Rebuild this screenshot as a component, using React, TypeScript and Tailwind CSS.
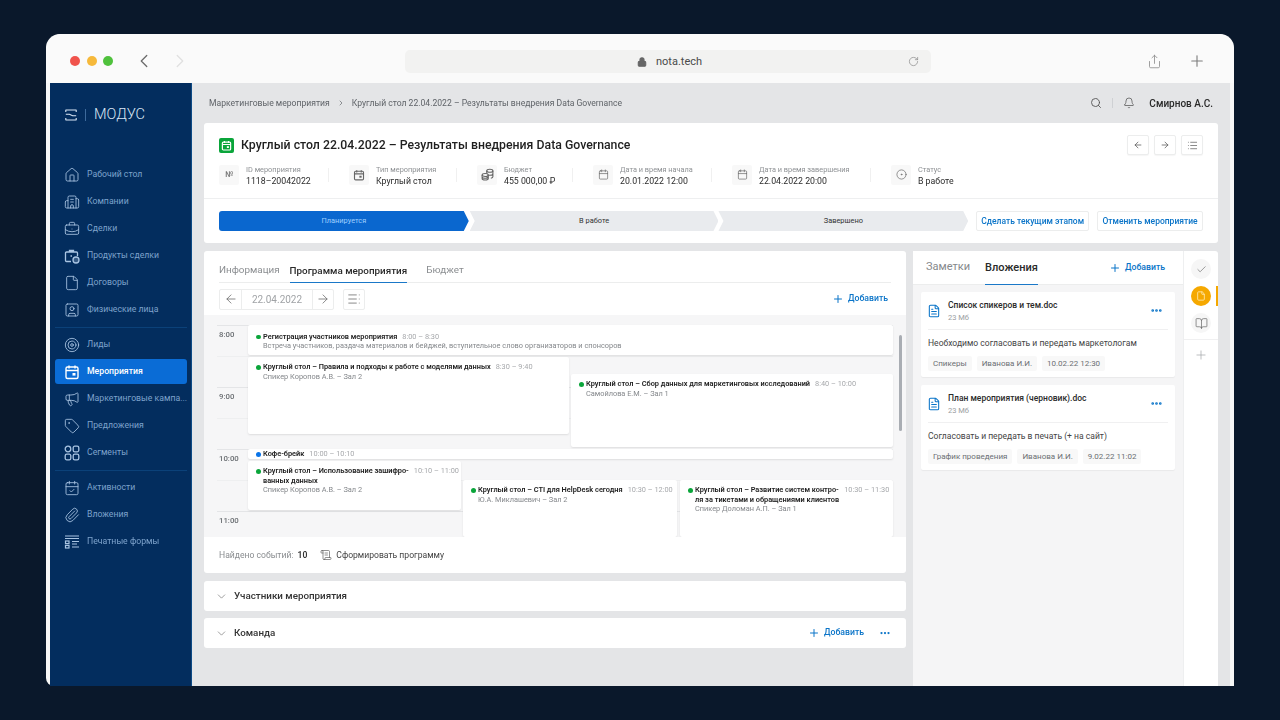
import React from "react";
import {
  House, Building2, BriefcaseBusiness, File, SquareUser, Target, Megaphone, Tag,
  CalendarCheck, Paperclip, ChevronLeft, ChevronRight, ChevronDown, Lock, RotateCw, Share, Plus, Search, Bell,
  ArrowLeft, ArrowRight, List, Calendar, CircleDot, FileText, Check, BookOpen, Ellipsis, ScrollText,
} from "lucide-react";

function EventIcon({ size = 16, sw = 1.4 }: { size?: number; sw?: number }) {
  return (
    <svg width={size} height={size} viewBox="0 0 16 16" fill="none" stroke="currentColor" strokeWidth={sw} className="shrink-0">
      <rect x="2" y="3" width="12" height="11.5" rx="1.5" />
      <path d="M2 6.5h12M5 1.5v3M11 1.5v3" />
      <rect x="8.5" y="9" width="3" height="2.6" fill="currentColor" stroke="none" />
    </svg>
  );
}
function CoinStack() {
  return (
    <svg width="13" height="13" viewBox="0 0 14 14" fill="none" stroke="currentColor" strokeWidth="1.2" className="shrink-0">
      <ellipse cx="9.5" cy="3" rx="3.3" ry="1.6" />
      <path d="M6.2 3v6.5c0 .5.8 1 1.8 1.3M12.8 3v6.5c0 .8-1 1.3-2.2 1.5M6.2 6.2c0 .9 1.5 1.6 3.3 1.6s3.3-.7 3.3-1.6" />
      <ellipse cx="4.5" cy="7.5" rx="3.3" ry="1.6" fill="#f8f8f8" />
      <path d="M1.2 7.5v3.8c0 .9 1.5 1.6 3.3 1.6s3.3-.7 3.3-1.6V7.5M1.2 9.4c0 .9 1.5 1.6 3.3 1.6s3.3-.7 3.3-1.6" />
    </svg>
  );
}
function ProductsIcon() {
  return (
    <svg width="16" height="16" viewBox="0 0 16 16" fill="none" stroke="currentColor" strokeWidth="1.3" className="shrink-0">
      <path d="M7 13.5H2.5a1 1 0 0 1-1-1V5a1 1 0 0 1 1-1h10a1 1 0 0 1 1 1v3M5.5 4V2.5h4V4M6.5 8h1.5" />
      <circle cx="12" cy="12" r="3" fill="currentColor" fillOpacity="0.3" />
    </svg>
  );
}
function Segments() {
  return (
    <svg width="16" height="16" viewBox="0 0 16 16" fill="none" stroke="currentColor" strokeWidth="1.3" className="shrink-0">
      <circle cx="4" cy="4" r="2.8" />
      <rect x="9.2" y="1.2" width="5.6" height="5.6" rx="1.6" />
      <rect x="1.2" y="9.2" width="5.6" height="5.6" rx="1.6" />
      <rect x="9.2" y="9.2" width="5.6" height="5.6" rx="1.6" />
    </svg>
  );
}
function PrintForms() {
  return (
    <svg width="16" height="16" viewBox="0 0 16 16" fill="none" stroke="currentColor" strokeWidth="1.2" className="shrink-0">
      <path d="M1 2h14M1 4.5h14M8 7.5h7M8 10h5M8 13h7" />
      <rect x="1.5" y="7" width="3.5" height="2.6" />
      <rect x="1.5" y="11.4" width="3.5" height="2.6" />
    </svg>
  );
}
function Logo() {
  return (
    <svg width="12" height="12" viewBox="0 0 12 12" fill="none" stroke="#dbe7f5" strokeWidth="1.1">
      <path d="M0.5 1h11M0.5 11h11M0.8 1v2M11.2 1v2M0.8 11V9M11.2 11V9M0.8 5.2h3.6l3.2 1.6h3.6" />
    </svg>
  );
}

type NavItem = { label: string; icon: React.ReactNode; active?: boolean };
const ic = { size: 16, strokeWidth: 1.3, className: "shrink-0" };
const navGroups: NavItem[][] = [
  [
    { label: "Рабочий стол", icon: <House {...ic} /> },
    { label: "Компании", icon: <Building2 {...ic} /> },
    { label: "Сделки", icon: <BriefcaseBusiness {...ic} /> },
    { label: "Продукты сделки", icon: <ProductsIcon /> },
    { label: "Договоры", icon: <File {...ic} /> },
    { label: "Физические лица", icon: <SquareUser {...ic} /> },
  ],
  [
    { label: "Лиды", icon: <Target {...ic} /> },
    { label: "Мероприятия", icon: <EventIcon />, active: true },
    { label: "Маркетинговые кампа...", icon: <Megaphone {...ic} /> },
    { label: "Предложения", icon: <Tag {...ic} /> },
    { label: "Сегменты", icon: <Segments /> },
  ],
  [
    { label: "Активности", icon: <CalendarCheck {...ic} /> },
    { label: "Вложения", icon: <Paperclip {...ic} /> },
    { label: "Печатные формы", icon: <PrintForms /> },
  ],
];

function Sidebar() {
  return (
    <aside className="w-[142px] shrink-0 bg-[#032d5e] border-r border-[#0d4a85] flex flex-col">
      <div className="h-[62px] pl-[15px] pt-[2px] flex items-center shrink-0">
        <Logo />
        <div className="ml-[8px] w-px h-[12px] bg-[#3d6a9c]" />
        <span className="ml-[8px] text-[14.5px] font-light text-[#dbe7f5] leading-none">МОДУС</span>
      </div>
      <div className="flex flex-col pt-[17px] ml-[5px] mr-[4px]">
        {navGroups.map((g, i) => (
          <div key={i} className={i > 0 ? "mt-[3px] pt-[4px] border-t border-[#0b4179]" : ""}>
            {g.map((n) => (
              <div
                key={n.label}
                className={
                  n.active
                    ? "h-[25px] mb-[2px] pl-[9px] flex items-center gap-[7px] rounded-[3px] bg-[#0a6cd6] text-white font-medium"
                    : "h-[25px] mb-[2px] pl-[9px] flex items-center gap-[7px] text-[#7ea3cc]"
                }
              >
                <span className={n.active ? "text-white" : "text-[#a9c4e2]"}>{n.icon}</span>
                <span className="text-[8.7px] whitespace-nowrap">{n.label}</span>
              </div>
            ))}
          </div>
        ))}
      </div>
    </aside>
  );
}

function Toolbar() {
  return (
    <div className="h-[49px] shrink-0 bg-[#fafafa] rounded-t-[14px] flex items-center relative pt-[5px]">
      <div className="flex gap-[6.5px] pl-[24px]">
        <span className="w-[10px] h-[10px] rounded-full bg-[#f0534c]" />
        <span className="w-[10px] h-[10px] rounded-full bg-[#f6b93b]" />
        <span className="w-[10px] h-[10px] rounded-full bg-[#4fc13c]" />
      </div>
      <ChevronLeft size={22} strokeWidth={1.4} className="text-[#6b6b6b] ml-[20px]" />
      <ChevronRight size={22} strokeWidth={1.4} className="text-[#e0e0e0] ml-[14px]" />
      <div className="ml-[214px] w-[526px] h-[23px] rounded-[5px] bg-[#f2f2f1] flex items-center justify-center relative">
        <div className="flex items-center gap-[9px] text-[#4a4a4a] ml-[3px] pt-[2px]">
          <Lock size={10} strokeWidth={2.5} className="text-[#666]" fill="#666" />
          <span className="text-[11px]">nota.tech</span>
        </div>
        <RotateCw size={11} strokeWidth={1.5} className="absolute right-[12px] text-[#888]" />
      </div>
      <Share size={15} strokeWidth={1.3} className="ml-[216px] text-[#8a8a8a]" />
      <Plus size={18} strokeWidth={1.5} className="ml-[26px] text-[#7d7d7d]" />
    </div>
  );
}

function TopBar() {
  return (
    <div className="h-[40px] shrink-0 flex items-center pl-[17px] pr-[17px] text-[#5f6368]">
      <span className="text-[8.6px]">Маркетинговые мероприятия</span>
      <ChevronRight size={8} strokeWidth={2} className="mx-[7px]" />
      <span className="text-[8.6px]">Круглый стол 22.04.2022 – Результаты внедрения Data Governance</span>
      <div className="ml-auto flex items-center">
        <Search size={12} strokeWidth={1.8} className="text-[#555]" />
        <div className="w-px h-[10px] bg-[#cfd1d4] mx-[10px]" />
        <Bell size={12} strokeWidth={1.5} className="text-[#555]" />
        <span className="ml-[14px] text-[10px] font-medium text-[#2a2a2a]">Смирнов А.С.</span>
      </div>
    </div>
  );
}

const metas = [
  { w: "w-[130px]", sep: true, icon: <span className="text-[8px] font-medium text-[#777]">№</span>, l: "ID мероприятия", v: "1118–20042022" },
  { w: "w-[128px]", sep: true, icon: <EventIcon size={12} sw={1.5} />, l: "Тип мероприятия", v: "Круглый стол" },
  { w: "w-[116px]", sep: true, icon: <CoinStack />, l: "Бюджет", v: "455 000,00 ₽" },
  { w: "w-[139px]", sep: true, icon: <Calendar size={11} strokeWidth={1.5} />, l: "Дата и время начала", v: "20.01.2022 12:00" },
  { w: "w-[159px]", sep: true, icon: <Calendar size={11} strokeWidth={1.5} />, l: "Дата и время завершения", v: "22.04.2022 20:00" },
  { w: "w-[120px]", sep: false, icon: <CircleDot size={11} strokeWidth={1.5} />, l: "Статус", v: "В работе" },
];

function SmallBtn({ children }: { children: React.ReactNode }) {
  return (
    <div className="w-[22px] h-[20px] bg-white border border-[#eceded] rounded-[2px] flex items-center justify-center text-[#555] shadow-[0_1px_1px_rgba(0,0,0,0.04)]">
      {children}
    </div>
  );
}

function HeadCard() {
  return (
    <section className="h-[120px] bg-white rounded-[3px] shrink-0 flex flex-col">
      <div className="h-[76px] border-b border-[#eeeff0] px-[15px] pt-[12px] flex flex-col">
        <div className="flex items-center h-[20px]">
          <div className="w-[15px] h-[15px] rounded-[2px] bg-[#0aa53a] flex items-center justify-center text-white">
            <EventIcon size={11} sw={1.7} />
          </div>
          <h1 className="ml-[7px] text-[12.3px] font-medium text-[#1f1f1f] whitespace-nowrap">
            Круглый стол 22.04.2022 – Результаты внедрения Data Governance
          </h1>
          <div className="ml-auto flex gap-[5px]">
            <SmallBtn><ArrowLeft size={10} strokeWidth={1.8} /></SmallBtn>
            <SmallBtn><ArrowRight size={10} strokeWidth={1.8} /></SmallBtn>
            <SmallBtn><List size={11} strokeWidth={1.5} /></SmallBtn>
          </div>
        </div>
        <div className="flex mt-[6px]">
          {metas.map((m) => (
            <div key={m.l} className={`${m.w} flex items-center shrink-0`}>
              <div className="w-[20px] h-[20px] rounded-[2px] bg-[#f8f8f8] flex items-center justify-center text-[#666] shrink-0">{m.icon}</div>
              <div className="ml-[7px] flex flex-col pt-[3px]">
                <span className="text-[7.35px] leading-[11px] text-[#8e9194] whitespace-nowrap">{m.l}</span>
                <span className="text-[8.75px] leading-[13px] text-[#2b2b2b] whitespace-nowrap">{m.v}</span>
              </div>
              {m.sep && <div className="ml-auto mr-[20px] w-px h-[14px] bg-[#f0f0f0]" />}
            </div>
          ))}
        </div>
      </div>
      <div className="flex items-center px-[15px] pt-[12px]">
        <div className="w-[250px] h-[20px] bg-[#0a67cf] rounded-l-[3px] [clip-path:polygon(0_0,98%_0,100%_50%,98%_100%,0_100%)] flex items-center justify-center text-[7.4px] text-[#9fd0ff]">Планируется</div>
        <div className="ml-[1px] w-[249px] h-[20px] bg-[#e9ebee] [clip-path:polygon(0_0,98%_0,100%_50%,98%_100%,0_100%,2%_50%)] flex items-center justify-center text-[7.4px] text-[#333]">В работе</div>
        <div className="w-[250px] h-[20px] bg-[#e9ebee] [clip-path:polygon(0_0,98%_0,100%_50%,98%_100%,0_100%,2%_50%)] flex items-center justify-center text-[7.4px] text-[#333]">Завершено</div>
        <div className="ml-[8px] w-[113px] h-[20px] bg-white border border-[#eceded] rounded-[2px] flex items-center justify-center text-[8.5px] font-medium text-[#0a74c8] whitespace-nowrap">Сделать текущим этапом</div>
        <div className="ml-[8px] w-[106px] h-[20px] bg-white border border-[#eceded] rounded-[2px] flex items-center justify-center text-[8.5px] font-medium text-[#0a74c8] whitespace-nowrap">Отменить мероприятие</div>
      </div>
    </section>
  );
}

function AddBtn() {
  return (
    <div className="flex items-center gap-[4px] text-[#0a74c8]">
      <Plus size={12} strokeWidth={2} />
      <span className="text-[8.7px] font-medium">Добавить</span>
    </div>
  );
}

type Ev = { pos: string; color: string; title: React.ReactNode; time: string; sub?: string; row?: boolean; pt?: string };
const events: Ev[] = [
  { pos: "top-[10px] left-[44px] w-[645px] h-[30px]", pt: "pt-[6.5px]", color: "bg-[#0aa53a]", title: "Регистрация участников мероприятия", time: "8:00 – 8:30", sub: "Встреча участников, раздача материалов и бейджей, вступительное слово организаторов и спонсоров" },
  { pos: "top-[42px] left-[44px] w-[321px] h-[77px]", color: "bg-[#0aa53a]", title: "Круглый стол – Правила и подходы к работе с моделями данных", time: "8:30 – 9:40", sub: "Спикер Коропов А.В. – Зал 2" },
  { pos: "top-[59px] left-[367px] w-[322px] h-[73px]", color: "bg-[#0aa53a]", title: "Круглый стол – Сбор данных для маркетинговых исследований", time: "8:40 – 10:00", sub: "Самойлова Е.М. – Зал 1" },
  { pos: "top-[134px] left-[44px] w-[645px] h-[10px]", color: "bg-[#0a74e8]", title: "Кофе-брейк", time: "10:00 – 10:10", row: true },
  { pos: "top-[146px] left-[44px] w-[213px] h-[49px]", color: "bg-[#0aa53a]", title: <>Круглый стол – Использование зашифро-<br />ванных данных</>, time: "10:10 – 11:00", sub: "Спикер Коропов А.В. – Зал 2" },
  { pos: "top-[165px] left-[259px] w-[214px] h-[57px]", color: "bg-[#0aa53a]", title: "Круглый стол – CTI для HelpDesk сегодня", time: "10:30 – 12:00", sub: "Ю.А. Миклашевич – Зал 2" },
  { pos: "top-[165px] left-[476px] w-[213px] h-[57px]", color: "bg-[#0aa53a]", title: <>Круглый стол – Развитие систем контро-<br />ля за тикетами и обращениями клиентов</>, time: "10:30 – 11:30", sub: "Спикер Доломан А.П. – Зал 1" },
];

function Schedule() {
  const rows = ["8:00", "", "9:00", "", "10:00", "", "11:00"];
  return (
    <div className="relative h-[222px] bg-[#f6f6f7] overflow-hidden pt-[10px] shrink-0">
      {rows.map((r, i) => (
        <div key={i} className={r ? "h-[31px] ml-[13px] mr-[13px] border-t border-[#e4e5e7] pl-[2px] pt-[3px] text-[7.8px] font-medium text-[#6b6f73]" : "h-[31px] ml-[13px] mr-[13px] border-t border-[#eeeff0]"}>{r}</div>
      ))}
      {events.map((e, i) => (
        <div key={i} className={`absolute ${e.pos} bg-white rounded-[2px] shadow-[0_1px_2px_rgba(0,0,0,0.1)] overflow-hidden ${e.row ? "pl-[8px] flex items-center" : `pl-[8px] ${e.pt ?? "pt-[5px]"}`}`}>
          <div className="flex items-start">
            <span className={`w-[4.5px] h-[4.5px] rounded-full ${e.color} mt-[3px] mr-[2.5px] shrink-0`} />
            <span className="text-[7.36px] leading-[9.5px] font-semibold text-[#222] whitespace-nowrap">{e.title}</span>
            <span className="ml-[5px] text-[7.36px] leading-[9.5px] text-[#a7a9ac] whitespace-nowrap">{e.time}</span>
          </div>
          {e.sub && <div className="pl-[7px] text-[7.36px] leading-[10px] text-[#85888c] whitespace-nowrap">{e.sub}</div>}
        </div>
      ))}
      <div className="absolute top-[20px] left-[695px] w-[3px] h-[96px] rounded-full bg-[#a9adb3]" />
    </div>
  );
}

function ProgramPanel() {
  return (
    <section className="h-[322px] mb-[1px] bg-white rounded-[3px] flex flex-col shrink-0">
      <div className="h-[32px] mx-[15px] flex items-end gap-[10px] border-b border-[#eceded] text-[9.85px] shrink-0">
        <span className="h-[19px] text-[#8a8d90]">Информация</span>
        <span className="h-[19px] font-medium text-[#2a2a2a] border-b border-[#1a78c8] -mb-px">Программа мероприятия</span>
        <span className="h-[19px] ml-[9px] text-[#8a8d90]">Бюджет</span>
      </div>
      <div className="h-[32px] pl-[15px] pr-[18px] flex items-center shrink-0">
        <div className="flex h-[21px] border border-[#eceded] rounded-[2px] items-stretch text-[#666]">
          <div className="w-[21px] flex items-center justify-center"><ArrowLeft size={14} strokeWidth={1.3} /></div>
          <div className="w-[72px] border-x border-[#eceded] flex items-center justify-center text-[10px] text-[#a0a3a6]">22.04.2022</div>
          <div className="w-[20px] flex items-center justify-center"><ArrowRight size={14} strokeWidth={1.3} /></div>
        </div>
        <div className="ml-[9px] w-[22px] h-[21px] border border-[#eceded] rounded-[2px] flex items-center justify-center text-[#666]">
          <List size={14} strokeWidth={1.3} className="-scale-x-100" />
        </div>
        <div className="ml-auto"><AddBtn /></div>
      </div>
      <Schedule />
      <div className="flex-1 pl-[15px] flex items-center text-[8.6px]">
        <span className="text-[#8a8d90]">Найдено событий:</span>
        <span className="ml-[4px] font-semibold text-[#333]">10</span>
        <ScrollText size={12} strokeWidth={1.3} className="ml-[13px] text-[#555]" />
        <span className="ml-[4px] text-[#444]">Сформировать программу</span>
      </div>
    </section>
  );
}

function Accordion({ title, extra }: { title: string; extra?: boolean }) {
  return (
    <section className="h-[30px] bg-white rounded-[3px] flex items-center pl-[11px] pr-[15px] shrink-0">
      <ChevronDown size={13} strokeWidth={1.3} className="text-[#777]" />
      <span className="ml-[6px] text-[9.8px] font-medium text-[#333]">{title}</span>
      {extra && (
        <div className="ml-auto flex items-center gap-[15px]">
          <AddBtn />
          <Ellipsis size={12} strokeWidth={2.5} className="text-[#0a74c8]" />
        </div>
      )}
    </section>
  );
}

const files = [
  { name: "Список спикеров и тем.doc", desc: "Необходимо согласовать и передать маркетологам", tags: ["Спикеры", "Иванова И.И.", "10.02.22 12:30"] },
  { name: "План мероприятия (черновик).doc", desc: "Согласовать и передать в печать (+ на сайт)", tags: ["График проведения", "Иванова И.И.", "9.02.22 11:02"] },
];

function RightPanel() {
  return (
    <section className="w-[305px] shrink-0 bg-white rounded-t-[3px] flex">
      <div className="w-[271px] flex flex-col bg-[#f5f5f6] border-r border-[#eeeff0]">
        <div className="h-[34px] bg-white flex items-end pl-[13px] pr-[18px] border-b border-[#eceded] shrink-0">
          <span className="h-[25px] text-[11px] text-[#85888c]">Заметки</span>
          <span className="h-[25px] ml-[15px] text-[11px] font-medium text-[#2a2a2a] border-b border-[#1a78c8] -mb-px">Вложения</span>
          <div className="ml-auto h-[25px] flex items-start pt-[2px]"><AddBtn /></div>
        </div>
        <div className="flex flex-col gap-[8px] px-[8px] pt-[7px]">
          {files.map((f) => (
            <div key={f.name} className="h-[85px] bg-white rounded-[2px] shadow-[0_1px_1px_rgba(0,0,0,0.05)] px-[7px] flex flex-col">
              <div className="h-[38px] border-b border-[#f0f0f1] flex items-center">
                <FileText size={14} strokeWidth={1.8} className="text-[#0a74c8] shrink-0 ml-[-1px]" />
                <div className="ml-[7px] flex flex-col">
                  <span className="text-[8.5px] leading-[14px] font-medium text-[#2a2a2a] whitespace-nowrap">{f.name}</span>
                  <span className="text-[7.5px] leading-[12px] text-[#9a9da0]">23 Мб</span>
                </div>
                <Ellipsis size={13} strokeWidth={3} className="ml-auto mr-[5px] text-[#0a74c8]" />
              </div>
              <div className="mt-[7px] text-[8.56px] leading-[12px] text-[#444] whitespace-nowrap">{f.desc}</div>
              <div className="mt-[7px] flex gap-[5px]">
                {f.tags.map((t) => (
                  <span key={t} className="h-[15px] px-[5px] rounded-[2px] bg-[#f8f8f8] text-[8px] leading-[15px] text-[#6b6f73] whitespace-nowrap">{t}</span>
                ))}
              </div>
            </div>
          ))}
        </div>
      </div>
      <div className="w-[34px] relative flex flex-col items-center pt-[8px]">
        <div className="w-[20px] h-[20px] rounded-full bg-[#f6f6f6] flex items-center justify-center text-[#777]"><Check size={11} strokeWidth={1.6} /></div>
        <div className="mt-[7px] w-[20px] h-[20px] rounded-full bg-[#f5a800] flex items-center justify-center text-[#ffe9b0]"><File size={10} strokeWidth={2} /></div>
        <div className="absolute top-[35px] right-0 w-[2px] h-[20px] bg-[#f5a800]" />
        <div className="mt-[7px] w-[20px] h-[20px] rounded-full bg-[#f6f6f6] flex items-center justify-center text-[#666]"><BookOpen size={13} strokeWidth={1.3} /></div>
        <div className="w-full mt-[6px] border-t border-[#f0f0f1]" />
        <Plus size={14} strokeWidth={1.2} className="mt-[8px] text-[#a0a3a6]" />
      </div>
    </section>
  );
}

export default function App() {
  return (
    <div className="w-[1280px] h-[720px] bg-[#0a182b] pt-[34px] pl-[46px] overflow-hidden [font-family:Roboto,sans-serif]">
      <div className="w-[1188px] h-[652px] bg-[#f7f7f7] rounded-t-[16px] rounded-bl-[8px] px-[4px] flex flex-col blur-[0.35px]">
        <div className="-mx-[4px]"><Toolbar /></div>
        <div className="flex-1 flex min-h-0">
          <Sidebar />
          <main className="flex-1 bg-[#e4e5e7] flex flex-col min-w-0 pl-[12px] pr-[12px]">
            <div className="-ml-[12px] -mr-[12px]"><TopBar /></div>
            <HeadCard />
            <div className="flex-1 flex gap-[7px] mt-[8px] min-h-0">
              <div className="w-[702px] shrink-0 flex flex-col gap-[7px]">
                <ProgramPanel />
                <Accordion title="Участники мероприятия" />
                <Accordion title="Команда" extra />
              </div>
              <RightPanel />
            </div>
          </main>
        </div>
      </div>
    </div>
  );
}
